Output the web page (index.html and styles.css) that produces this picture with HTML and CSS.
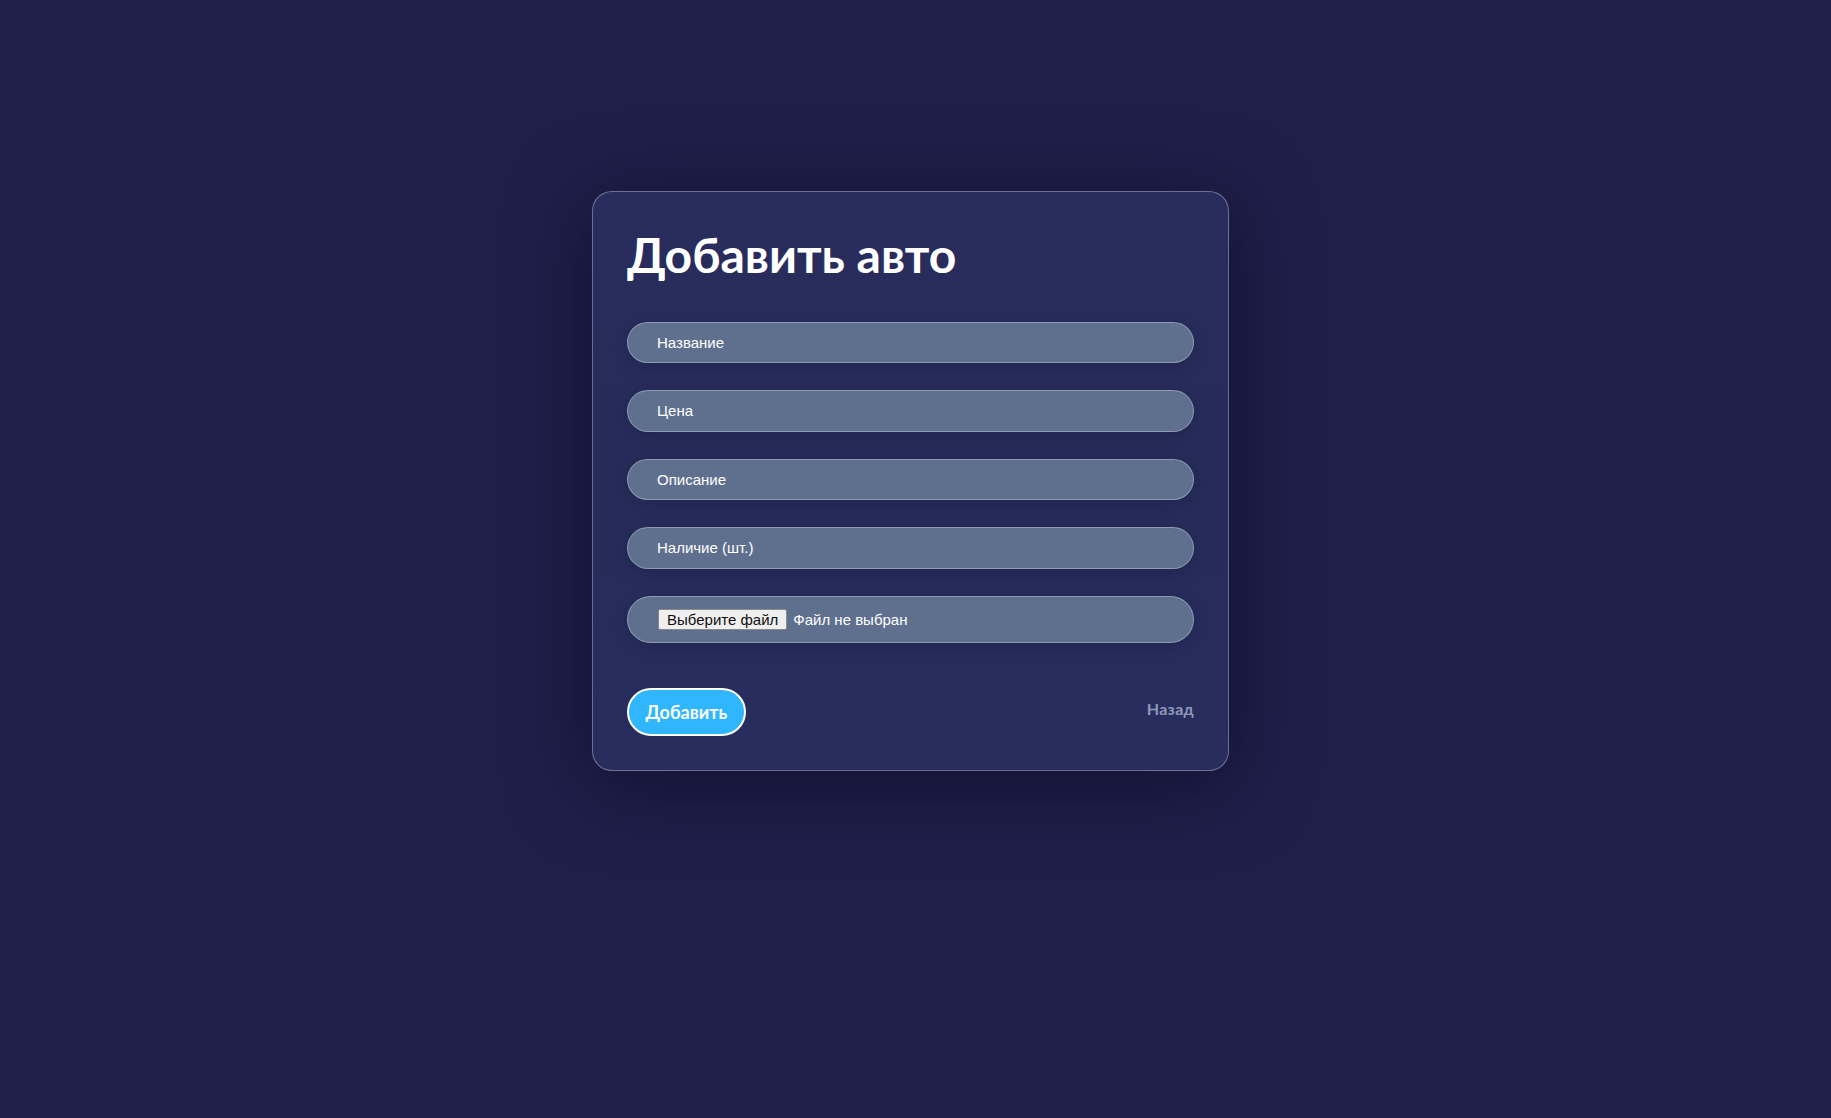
FILE: index.html
```html
<!DOCTYPE html>
<html lang="ru">
<head>
<meta charset="utf-8">
<title>Добавить авто</title>
<link rel="stylesheet" href="styles.css">
</head>
<body>
<main class="page">
  <section class="card">
    <h1 class="title">Добавить авто</h1>
    <form class="form">
      <div class="fields">
        <input class="field" type="text" placeholder="Название">
        <input class="field" type="text" placeholder="Цена">
        <input class="field" type="text" placeholder="Описание">
        <input class="field" type="text" placeholder="Наличие (шт.)">
        <label class="field file-field">
          <input class="file-input" type="file">
          <span class="file-btn">Выберите файл</span>
          <span class="file-name">Файл не выбран</span>
        </label>
      </div>
      <div class="actions">
        <button class="submit" type="button">Добавить</button>
        <a class="back" href="#">Назад</a>
      </div>
    </form>
  </section>
</main>
</body>
</html>
```

FILE: styles.css
```css
* { box-sizing: border-box; }

html, body {
  margin: 0;
  height: 100%;
}

body {
  background: #1f1f4a;
  font-family: Lato, "Open Sans", sans-serif;
  color: #fff;
}

.page {
  display: flex;
  justify-content: center;
  padding-top: 191px;
  padding-right: 10px;
}

.card {
  width: 637px;
  padding: 34px;
  border: 1px solid rgba(255, 255, 255, 0.32);
  border-radius: 20px;
  background: linear-gradient(180deg, #282d5d 0%, #262b59 50%, #282d5e 100%);
  box-shadow: 0 12px 80px rgba(8, 8, 28, 0.55);
}

.title {
  margin: 0 0 38px;
  font-family: Lato, "Open Sans", sans-serif;
  font-size: 48px;
  line-height: 57.6px;
  font-weight: 700;
  color: #fff;
}

.form {
  display: flex;
  flex-direction: column;
  gap: 45px;
}

.fields {
  display: flex;
  flex-direction: column;
  gap: 27px;
}

.field {
  display: block;
  width: 100%;
  height: 41.5px;
  margin: 0;
  padding: 0 29px;
  border: 1px solid rgba(255, 255, 255, 0.3);
  border-radius: 25px;
  background: #5e708e;
  color: #fff;
  font-family: "Liberation Sans", Arial, sans-serif;
  font-size: 15px;
  outline: none;
  box-shadow: 0 4px 16px rgba(10, 10, 40, 0.15);
}

.field::placeholder {
  color: #fff;
  opacity: 1;
}

.file-field {
  display: flex;
  align-items: center;
  height: 47px;
  padding: 12px 30px;
  cursor: pointer;
}

.file-input {
  display: none;
}

.file-btn {
  display: inline-block;
  padding: 1px 8px;
  border: 1px solid #8a8a8a;
  border-radius: 2px;
  background: #efefef;
  color: #111;
  font-size: 15px;
  line-height: 17px;
}

.file-name {
  margin-left: 6px;
  color: #fff;
}

.actions {
  display: flex;
  justify-content: space-between;
  align-items: center;
}

.submit {
  height: 48px;
  padding: 0 16.5px;
  border: 2px solid #fff;
  border-radius: 24px;
  background: #2fb6fc;
  color: #fff;
  font-family: Lato, "Open Sans", sans-serif;
  font-size: 18px;
  font-weight: 700;
  cursor: pointer;
}

.back {
  margin-bottom: 7px;
  color: #8c9abb;
  font-family: Lato, "Open Sans", sans-serif;
  font-size: 16px;
  letter-spacing: 0.3px;
  font-weight: 700;
  text-decoration: none;
}
```
